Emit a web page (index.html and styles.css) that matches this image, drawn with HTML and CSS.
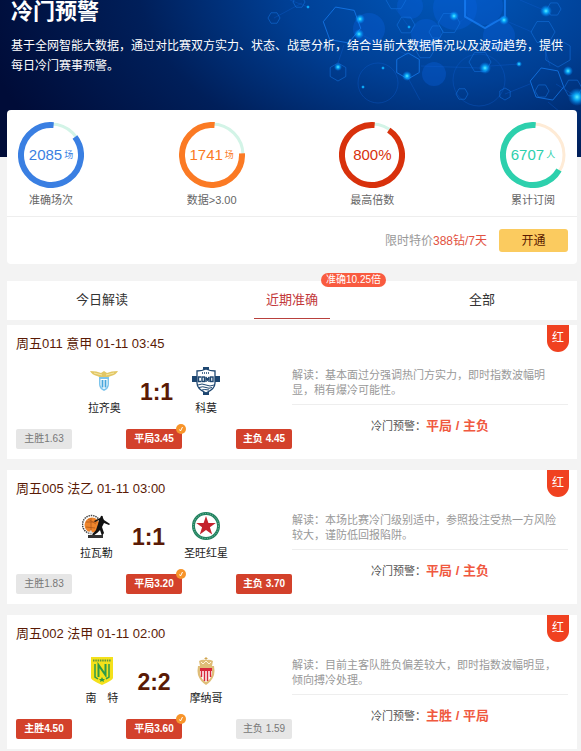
FILE: index.html
```html
<!DOCTYPE html>
<html lang="zh-CN">
<head>
    <meta charset="UTF-8">
    <meta name="viewport" content="width=device-width, initial-scale=1.0">
    <title>冷门预警</title>
    <link rel="stylesheet" href="styles.css">
</head>
<body>
    <header class="hero">
        <svg class="hero-bg" viewBox="0 0 581 157" preserveAspectRatio="xMaxYMin slice" aria-hidden="true">
            <defs>
                <radialGradient id="sky" gradientUnits="userSpaceOnUse" cx="450" cy="-30" r="480" gradientTransform="scale(1 0.6)">
                    <stop offset="0" stop-color="#0059bd"/>
                    <stop offset="0.35" stop-color="#003f94"/>
                    <stop offset="0.65" stop-color="#001f5a"/>
                    <stop offset="1" stop-color="#000c38"/>
                </radialGradient>
                <radialGradient id="glow">
                    <stop offset="0" stop-color="#5ff0ff"/>
                    <stop offset="0.35" stop-color="#0cb4ff" stop-opacity="0.9"/>
                    <stop offset="1" stop-color="#0080ff" stop-opacity="0"/>
                </radialGradient>
                <path id="hex" d="M-1 0L-.5 -.87H.5L1 0L.5 .87H-.5Z" vector-effect="non-scaling-stroke"/>
            </defs>
            <rect width="581" height="157" fill="url(#sky)"/>
            <g fill="#0a62e0" fill-opacity="0.35">
                <circle cx="369" cy="29" r="16"/>
                <circle cx="426" cy="34" r="15"/>
                <circle cx="410" cy="6" r="13"/>
                <circle cx="434" cy="74" r="12"/>
                <circle cx="455" cy="8" r="22"/>
                <circle cx="499" cy="36" r="16"/>
                <circle cx="484" cy="6" r="19"/>
            </g>
            <g fill="none" stroke="#0d5fd0" stroke-opacity="0.35">
                <circle cx="378" cy="83" r="20"/>
                <circle cx="479" cy="80" r="26"/>
                <path d="M274 18L302 3M344 45L338 63M359 34L408 55M421 66L480 68M460 22L470 14M504 20L532 32M519 64L490 66M546 11L520 0M396 9L409 27M556 84L577 97M530 84L505 94M407 76L420 100M543 44L550 66M548 102L560 112M308 7L290 0"/>
            </g>
            <g fill="none" stroke="#1677e8" stroke-opacity="0.5">
                <use href="#hex" transform="translate(274 18) scale(6)"/>
                <use href="#hex" transform="translate(299 2) scale(6)"/>
                <use href="#hex" transform="translate(396 0) scale(10)"/>
                <use href="#hex" transform="translate(406 25) scale(9)"/>
                <use href="#hex" transform="translate(436 32) scale(7)"/>
                <use href="#hex" transform="translate(449 23) scale(11)"/>
                <use href="#hex" transform="translate(425 49) scale(10)"/>
                <use href="#hex" transform="translate(338 72) rotate(30) scale(9)"/>
                <use href="#hex" transform="translate(480 62) scale(11)"/>
                <use href="#hex" transform="translate(543 32) scale(12)"/>
                <use href="#hex" transform="translate(554 9) scale(7)"/>
                <use href="#hex" transform="translate(558 53) rotate(30) scale(14)"/>
                <use href="#hex" transform="translate(542 91) scale(7)"/>
                <use href="#hex" transform="translate(462 94) scale(6)"/>
                <use href="#hex" transform="translate(505 94) rotate(30) scale(6)"/>
                <use href="#hex" transform="translate(573 88) scale(9)"/>
            </g>
            <g fill="none" stroke="#1b86ff" stroke-opacity="0.65">
                <use href="#hex" transform="translate(342 25) rotate(10) scale(19)"/>
                <use href="#hex" transform="translate(408 66) rotate(30) scale(13)"/>
                <use href="#hex" transform="translate(547 84) rotate(10) scale(17)"/>
                <use href="#hex" transform="translate(485 5) rotate(30) scale(23)" stroke-width="2"/>
            </g>
            <g fill="url(#glow)">
                <circle cx="360" cy="19" r="5"/>
                <circle cx="359" cy="34" r="5"/>
                <circle cx="454" cy="16" r="5"/>
                <circle cx="504" cy="20" r="5"/>
                <circle cx="546" cy="11" r="6"/>
                <circle cx="338" cy="67" r="4"/>
                <circle cx="407" cy="76" r="5"/>
                <circle cx="485" cy="68" r="6"/>
                <circle cx="519" cy="64" r="3"/>
                <circle cx="568" cy="71" r="5"/>
                <circle cx="577" cy="97" r="9"/>
                <circle cx="363" cy="87" r="2"/>
                <circle cx="383" cy="68" r="2"/>
                <circle cx="409" cy="27" r="2"/>
                <circle cx="308" cy="7" r="2"/>
            </g>
        </svg>
        <h1 class="hero-title">冷门预警</h1>
        <p class="hero-desc">基于全网智能大数据，通过对比赛双方实力、状态、战意分析，结合当前大数据情况以及波动趋势，提供每日冷门赛事预警。</p>
    </header>

    <main class="page">
        <section class="summary">
            <ul class="stats">
                <li class="stat blue">
                    <div class="gauge">
                        <svg class="ring" viewBox="0 0 66 66" aria-hidden="true">
                            <circle class="track" cx="33" cy="33" r="31"/>
                            <circle class="arc" cx="33" cy="33" r="30" pathLength="360" stroke-dasharray="312 360" transform="rotate(-37 33 33)"/>
                        </svg>
                        <div class="value"><span>2085</span><small>场</small></div>
                    </div>
                    <span class="label">准确场次</span>
                </li>
                <li class="stat orange">
                    <div class="gauge">
                        <svg class="ring" viewBox="0 0 66 66" aria-hidden="true">
                            <circle class="track" cx="33" cy="33" r="31"/>
                            <circle class="arc" cx="33" cy="33" r="30" pathLength="360" stroke-dasharray="278 360" transform="rotate(-3 33 33)"/>
                        </svg>
                        <div class="value"><span>1741</span><small>场</small></div>
                    </div>
                    <span class="label">数据&gt;3.00</span>
                </li>
                <li class="stat red">
                    <div class="gauge">
                        <svg class="ring" viewBox="0 0 66 66" aria-hidden="true">
                            <circle class="track" cx="33" cy="33" r="31"/>
                            <circle class="arc" cx="33" cy="33" r="30" pathLength="360" stroke-dasharray="331 360" transform="rotate(-56 33 33)"/>
                        </svg>
                        <div class="value"><span>800%</span></div>
                    </div>
                    <span class="label">最高倍数</span>
                </li>
                <li class="stat green">
                    <div class="gauge">
                        <svg class="ring" viewBox="0 0 66 66" aria-hidden="true">
                            <circle class="track" cx="33" cy="33" r="31"/>
                            <circle class="arc" cx="33" cy="33" r="30" pathLength="360" stroke-dasharray="245 360" transform="rotate(30 33 33)"/>
                        </svg>
                        <div class="value"><span>6707</span><small>人</small></div>
                    </div>
                    <span class="label">累计订阅</span>
                </li>
            </ul>
            <div class="offer">
                <span class="price">限时特价<em>388钻/7天</em></span>
                <button class="open-btn" type="button">开通</button>
            </div>
        </section>

        <nav class="tabs">
            <a class="tab" href="#today">今日解读</a>
            <a class="tab active" href="#recent">近期准确<span class="tab-badge">准确10.25倍</span></a>
            <a class="tab" href="#all">全部</a>
        </nav>

        <div class="matches">
            <article class="match">
                <span class="ribbon">红</span>
                <h2 class="match-title">周五011 意甲 01-11 03:45</h2>
                <div class="match-body">
                    <div class="game">
                        <div class="teams">
                            <div class="team">
                                <svg class="logo" viewBox="0 0 28 28" aria-hidden="true">
                                    <path d="M0 4Q7 4 11 6L14 4L17 6Q21 4 28 4Q26 8 21 9L16 11H12L7 9Q2 8 0 4Z" fill="#e2c765"/>
                                    <path d="M4 6L12 8M24 6L16 8" stroke="#f5e6a5" fill="none"/>
                                    <path d="M9 10H19V17Q19 22 14 24Q9 22 9 17Z" fill="#7cc4ec"/>
                                    <path d="M10.500 12H17.500V18Q17 21 14 22Q11 21 10.500 18Z" fill="#fff"/>
                                    <path d="M12.500 13V20.500M15.500 13V20.500" stroke="#46a6dc" stroke-width="1.800"/>
                                </svg>
                                <span class="name">拉齐奥</span>
                            </div>
                            <strong class="score">1:1</strong>
                            <div class="team">
                                <svg class="logo" viewBox="0 0 28 28" aria-hidden="true">
                                    <path d="M11 0H17V28H11ZM0 9H28V15H0Z" fill="#1d4670"/>
                                    <path d="M5 4Q10 4 14 2Q18 4 23 4V16Q23 22 14 26Q5 22 5 16Z" fill="#fff" stroke="#1d4670" stroke-width="1.3"/>
                                    <path d="M10 6H18" stroke="#1d4670" stroke-width="1.5" stroke-dasharray="1 1"/>
                                    <g fill="none" stroke="#1d4670" stroke-width="1.4">
                                        <path d="M9 10H6.500V14.500H9"/>
                                        <rect x="10" y="10" width="2.500" height="4.500"/>
                                        <path d="M14 15V10L15.500 13L17 10V15"/>
                                        <rect x="18.500" y="10" width="2.500" height="4.500"/>
                                    </g>
                                    <path d="M6 18Q10 16 14 18T22 18M7 20.500Q11 19 14 20.500T20 20.500M10 23Q12 22 17 23" stroke="#1d4670" fill="none"/>
                                </svg>
                                <span class="name">科莫</span>
                            </div>
                        </div>
                        <div class="odds">
                            <span class="odd">主胜1.63</span>
                            <span class="odd hit">平局3.45
                                <svg class="tick" viewBox="0 0 10 10" aria-hidden="true"><circle cx="5" cy="5" r="5" fill="#f7942a"/><path d="M3.500 5.500L4.500 7L6.500 3" fill="none" stroke="#fff"/></svg>
                            </span>
                            <span class="odd hit">主负 4.45</span>
                        </div>
                    </div>
                    <div class="analysis">
                        <p class="reading">解读：基本面过分强调热门方实力，即时指数波幅明显，稍有爆冷可能性。</p>
                        <p class="warning">冷门预警：<strong>平局 / 主负</strong></p>
                    </div>
                </div>
            </article>

            <article class="match">
                <span class="ribbon">红</span>
                <h2 class="match-title">周五005 法乙 01-11 03:00</h2>
                <div class="match-body">
                    <div class="game">
                        <div class="teams">
                            <div class="team">
                                <svg class="logo" viewBox="0 0 28 28" aria-hidden="true">
                                    <circle cx="9.500" cy="12.500" r="9" fill="none" stroke="#444" stroke-width="1.500" stroke-dasharray="1.500 .8"/>
                                    <circle cx="10" cy="13" r="7.500" fill="#ee852c"/>
                                    <path d="M4 10H15M9 6V18M4 15L13 16M6 7L14 12" stroke="#a85217" stroke-width=".7"/>
                                    <path d="M19 4Q21 3 21 6L22 8L28 12L27 13L22 11L20 15L22 21L20 24L18 18L15 21L11 24L10 23L14 18L16 12L17 8L13 10L12 9L18 6Z" fill="#111"/>
                                    <path d="M6 23H21V26H6Z" fill="#333"/>
                                    <path d="M6 21L9 18L11 22Z" fill="#ddd"/>
                                </svg>
                                <span class="name">拉瓦勒</span>
                            </div>
                            <strong class="score">1:1</strong>
                            <div class="team">
                                <svg class="logo" viewBox="0 0 28 28" aria-hidden="true">
                                    <circle cx="14" cy="14" r="12.500" fill="#fff" stroke="#21825f" stroke-width="3"/>
                                    <circle cx="14" cy="14" r="12.500" fill="none" stroke="#9accb8" stroke-width=".8" stroke-dasharray="1 1.500"/>
                                    <path d="M14 4L16.400 11H23.800L17.900 15.300L20.200 22.500L14 18L7.800 22.500L10.100 15.300L4.200 11H11.600Z" fill="#c4222d"/>
                                </svg>
                                <span class="name">圣旺红星</span>
                            </div>
                        </div>
                        <div class="odds">
                            <span class="odd">主胜1.83</span>
                            <span class="odd hit">平局3.20
                                <svg class="tick" viewBox="0 0 10 10" aria-hidden="true"><circle cx="5" cy="5" r="5" fill="#f7942a"/><path d="M3.500 5.500L4.500 7L6.500 3" fill="none" stroke="#fff"/></svg>
                            </span>
                            <span class="odd hit">主负 3.70</span>
                        </div>
                    </div>
                    <div class="analysis">
                        <p class="reading">解读：本场比赛冷门级别适中，参照投注受热一方风险较大，谨防低回报陷阱。</p>
                        <p class="warning">冷门预警：<strong>平局 / 主负</strong></p>
                    </div>
                </div>
            </article>

            <article class="match">
                <span class="ribbon">红</span>
                <h2 class="match-title">周五002 法甲 01-11 02:00</h2>
                <div class="match-body">
                    <div class="game">
                        <div class="teams">
                            <div class="team">
                                <svg class="logo" viewBox="0 0 28 28" aria-hidden="true">
                                    <path d="M3 0H25V21Q25 23 14 28Q3 23 3 21Z" fill="#f4e11b"/>
                                    <path d="M5 3.500H23" stroke="#63983a" stroke-width="2" stroke-dasharray="1.500 .8"/>
                                    <path d="M7 7V20L10 22M21 7V20L18 22" stroke="#2f9a48" stroke-width="1.500" fill="none"/>
                                    <path d="M10.500 20V8L17.500 18V7" stroke="#2f9a48" stroke-width="2" fill="none"/>
                                    <path d="M14 20L15 22H17L15.500 23.500L16 25L14 24L12 25L12.500 23.500L11 22H13Z" fill="#2f9a48"/>
                                </svg>
                                <span class="name">南　特</span>
                            </div>
                            <strong class="score">2:2</strong>
                            <div class="team">
                                <svg class="logo" viewBox="0 0 28 28" aria-hidden="true">
                                    <path d="M8 9L7 4Q10 2 14 3Q18 2 21 4L20 9Z" fill="#dfbd78"/>
                                    <path d="M9 5L11 7L14 4L17 7L19 5" stroke="#fff4d8" fill="none"/>
                                    <path d="M14 0V3M12.500 1.500H15.500" stroke="#d0a550"/>
                                    <path d="M6 9H22Q23 14 22 18Q20 24 14 28Q8 24 6 18Q5 14 6 9Z" fill="#dfbd78"/>
                                    <path d="M8 11H20V17Q19 22 14 25Q9 22 8 17Z" fill="#fff"/>
                                    <path d="M8 11H20V14H8Z" fill="#d8283c"/>
                                    <path d="M9.500 13V20M12.500 13V24M15.500 13V24M18.500 13V20" stroke="#d8283c" stroke-width="1.500"/>
                                </svg>
                                <span class="name">摩纳哥</span>
                            </div>
                        </div>
                        <div class="odds">
                            <span class="odd hit">主胜4.50</span>
                            <span class="odd hit">平局3.60
                                <svg class="tick" viewBox="0 0 10 10" aria-hidden="true"><circle cx="5" cy="5" r="5" fill="#f7942a"/><path d="M3.500 5.500L4.500 7L6.500 3" fill="none" stroke="#fff"/></svg>
                            </span>
                            <span class="odd">主负 1.59</span>
                        </div>
                    </div>
                    <div class="analysis">
                        <p class="reading">解读：目前主客队胜负偏差较大，即时指数波幅明显，倾向搏冷处理。</p>
                        <p class="warning">冷门预警：<strong>主胜 / 平局</strong></p>
                    </div>
                </div>
            </article>
        </div>
    </main>
</body>
</html>
```

FILE: styles.css
```css
* {
    margin: 0;
    padding: 0;
    box-sizing: border-box;
}

body {
    font-family: "Liberation Sans", "Noto Sans CJK SC", sans-serif;
    font-size: 12px;
    line-height: 20px;
    background: #f3f3f3;
    color: #333;
}

/* hero */
.hero {
    position: relative;
    overflow: hidden;
    padding: 0 11px 81px;
    background: #000c38;
    color: #fff;
}

.hero-bg {
    position: absolute;
    top: 0;
    left: 0;
    width: 100%;
    height: 100%;
}

.hero-title,
.hero-desc {
    position: relative;
}

.hero-title {
    font-size: 22px;
    line-height: 24px;
    margin-bottom: 12px;
}

.page {
    padding: 0 4px 0 7px;
}

/* summary card, overlaps the hero */
.summary {
    position: relative;
    margin-top: -47px;
    margin-bottom: 17px;
    background: #fff;
    border-radius: 4px;
}

.stats {
    display: flex;
    justify-content: space-between;
    list-style: none;
    padding: 12px 11px 6px;
    border-bottom: 1px solid #eee;
}

.stat {
    display: flex;
    flex-direction: column;
    align-items: center;
    gap: 2px;
}

.gauge {
    display: grid;
    place-items: center;
    width: 66px;
    height: 66px;
}

.ring,
.value {
    grid-area: 1 / 1;
}

.ring {
    width: 66px;
    height: 66px;
    fill: none;
}

.track {
    stroke: #d3f4e7;
    stroke-width: 3;
}

.arc {
    stroke: currentColor;
    stroke-width: 6;
}

.value {
    display: flex;
    align-items: center;
    gap: 2px;
    font-size: 15px;
    white-space: nowrap;
}

.value small {
    font-size: 9px;
}

.blue { color: #3a7fe2; }
.orange { color: #fb7a24; }
.red { color: #d8310c; }
.green { color: #2dd0ad; }

.green .track {
    stroke: #feebd6;
}

.label {
    font-size: 11px;
    color: #666;
    white-space: nowrap;
}

.offer {
    display: flex;
    justify-content: flex-end;
    align-items: center;
    gap: 12px;
    padding: 12px 9px;
}

.price {
    color: #999;
}

.price em {
    font-style: normal;
    color: #e25241;
}

.open-btn {
    width: 69px;
    height: 23px;
    border: 0;
    border-radius: 3px;
    background: #fbcb5f;
    color: #5a1a00;
    font: inherit;
    cursor: pointer;
}

/* tabs */
.tabs {
    display: grid;
    grid-template-columns: repeat(3, 1fr);
    justify-items: center;
    margin-bottom: 5px;
    background: #fff;
}

.tab {
    position: relative;
    padding: 0 12px;
    font-size: 13px;
    line-height: 38px;
    height: 39px;
    color: #333;
    text-decoration: none;
}

.tab.active {
    color: #c2383a;
    border-bottom: 1px solid #b8403c;
    height: 38px;
}

.tab-badge {
    position: absolute;
    top: -8px;
    left: 67px;
    padding: 0 5px;
    border-radius: 7px;
    background: #f95b40;
    color: #fff;
    font-size: 10px;
    line-height: 14px;
    white-space: nowrap;
}

/* match cards */
.matches {
    display: grid;
    gap: 11px;
}

.match {
    position: relative;
    padding: 9px 9px 10px;
    background: #fff;
}

.ribbon {
    position: absolute;
    top: 0;
    right: 8px;
    width: 22px;
    height: 27px;
    border-radius: 0 0 11px 11px;
    background: #f04120;
    color: #fff;
    font-size: 12px;
    line-height: 27px;
    text-align: center;
}

.match-title {
    font-size: 13px;
    font-weight: normal;
    color: #5a1a05;
}

.match-body {
    display: grid;
    grid-template-columns: 1fr 1fr;
    padding-top: 13px;
}

.teams {
    display: flex;
    justify-content: center;
    align-items: center;
    gap: 19px;
    margin-bottom: 13px;
}

.team {
    display: flex;
    flex-direction: column;
    align-items: center;
    gap: 5px;
}

.logo {
    width: 28px;
    height: 28px;
}

.name {
    font-size: 11px;
    line-height: 16px;
    color: #222;
}

.score {
    font-size: 23px;
    line-height: 24px;
    color: #5a1a05;
}

.odds {
    display: flex;
    justify-content: space-between;
}

.odd {
    position: relative;
    width: 56px;
    border-radius: 2px;
    background: #e6e6e6;
    color: #777;
    font-size: 10px;
    text-align: center;
}

.odd.hit {
    background: #d3412b;
    color: #fff;
    font-weight: bold;
}

.tick {
    position: absolute;
    top: -5px;
    right: -4px;
    width: 10px;
    height: 10px;
}

.reading {
    padding: 0 8px 6px 0;
    border-bottom: 1px solid #eee;
    font-size: 11px;
    line-height: 15px;
    color: #999;
}

.analysis {
    padding-top: 1px;
}

.warning {
    padding-top: 11px;
    font-size: 11px;
    color: #555;
    text-align: center;
}

.warning strong {
    font-size: 13px;
    color: #f0593f;
}
```
